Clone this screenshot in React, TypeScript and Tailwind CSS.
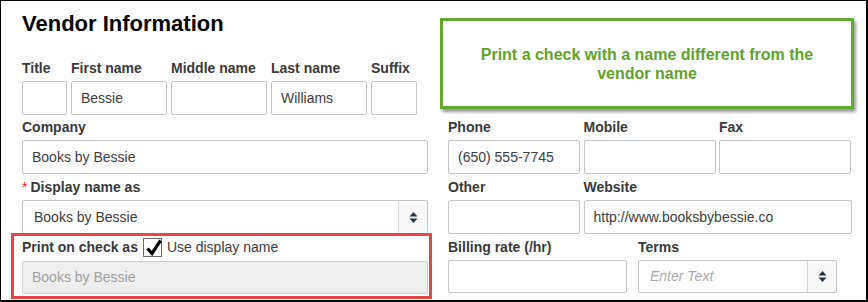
import React from 'react';

function Label({ children, required }: { children: React.ReactNode; required?: boolean }) {
  return (
    <div className="mb-[4px] h-[17px] whitespace-nowrap text-[14px] font-bold leading-[17px] text-[#393a3d]">
      {required && <span className="mr-[3px] font-normal text-[#d52b1e]">*</span>}
      {children}
    </div>
  );
}

function Input({ value, className = '' }: { value?: string; className?: string }) {
  return (
    <div
      className={`flex h-[34px] items-center rounded-[2px] border border-[#c4c6ca] bg-white pl-[9px] text-[14px] text-[#404040] ${className}`}
    >
      {value}
    </div>
  );
}

function Arrows() {
  return (
    <div className="flex w-[29px] shrink-0 items-center justify-center border-l border-[#d4d6d9] bg-[#f8f8f8]">
      <svg width="9" height="13" viewBox="0 0 9 13">
        <path d="M4.5 1 L8.5 5.5 L0.5 5.5 Z" fill="#253447" />
        <path d="M4.5 12 L8.5 7.5 L0.5 7.5 Z" fill="#253447" />
      </svg>
    </div>
  );
}

function Select({ value, placeholder, className = '' }: { value?: string; placeholder?: string; className?: string }) {
  return (
    <div className={`flex h-[34px] rounded-[2px] border border-[#c4c6ca] bg-white ${className}`}>
      <div className="flex flex-1 items-center pl-[11px] text-[14px] text-[#404040]">
        {value ?? <span className="italic text-[#a9abae]">{placeholder}</span>}
      </div>
      <Arrows />
    </div>
  );
}

function Field({ label, value, width, required }: { label: string; value?: string; width: string; required?: boolean }) {
  return (
    <div className={width}>
      <Label required={required}>{label}</Label>
      <Input value={value} />
    </div>
  );
}

export default function App() {
  return (
    <div className="relative h-[302px] w-[868px] overflow-hidden border-b-2 border-l border-r-2 border-t border-black bg-white pl-[21px] pt-[10px] font-['Liberation_Sans',Arial,sans-serif]">
      <h2 className="h-[26px] text-[22px] font-bold leading-[26px] text-black">Vendor Information</h2>

      {/* row 1 */}
      <div className="mt-[23px] flex gap-[4px]">
        <Field label="Title" width="w-[45px]" />
        <Field label="First name" value="Bessie" width="w-[96px]" />
        <Field label="Middle name" width="w-[96px]" />
        <Field label="Last name" value="Williams" width="w-[96px]" />
        <Field label="Suffix" width="w-[46px]" />
      </div>

      {/* row 2 */}
      <div className="mt-[4px] flex gap-[20px]">
        <Field label="Company" value="Books by Bessie" width="w-[406px]" />
        <div className="flex gap-[3.5px]">
          <Field label="Phone" value="(650) 555-7745" width="w-[132px]" />
          <Field label="Mobile" width="w-[132px]" />
          <Field label="Fax" width="w-[132px]" />
        </div>
      </div>

      {/* row 3 */}
      <div className="mt-[5px] flex gap-[20px]">
        <div className="w-[406px]">
          <Label required>Display name as</Label>
          <Select value="Books by Bessie" />
        </div>
        <div className="flex gap-[3.5px]">
          <Field label="Other" width="w-[132px]" />
          <Field label="Website" value="http://www.booksbybessie.co" width="w-[268px]" />
        </div>
      </div>

      {/* row 4 */}
      <div className="mt-[4px] flex gap-[20px]">
        <div className="w-[406px]">
          <div className="mb-[4px] flex h-[19px] items-center text-[14px] text-[#393a3d]">
            <span className="font-bold">Print on check as</span>
            <span className="relative ml-[5px] h-[19px] w-[19px] border border-[#6b6b6b] bg-white">
              <svg className="absolute left-[1px] top-[-1px]" width="18" height="19" viewBox="0 0 18 19">
                <path d="M2.5 10.5 L7 15.5 L15.5 2.5" fill="none" stroke="#000" strokeWidth="3.2" />
              </svg>
            </span>
            <span className="ml-[5px] text-[#404040]">Use display name</span>
          </div>
          <Input value="Books by Bessie" className="!h-[33px] !border-[#d0d0d0] !bg-[#eeeeee] !text-[#a2a2a2]" />
        </div>
        <div className="mt-[1px] flex gap-[11px]">
          <div className="w-[179px]">
            <Label>Billing rate (/hr)</Label>
            <Input className="!h-[33px]" />
          </div>
          <div className="w-[199px]">
            <Label>Terms</Label>
            <Select placeholder="Enter Text" className="!h-[33px]" />
          </div>
        </div>
      </div>

      {/* annotations */}
      <div className="pointer-events-none absolute left-[10px] top-[232px] h-[66px] w-[421px] border-[3px] border-[#e0484a]" />
      <div className="absolute left-[439px] top-[17px] flex h-[91px] w-[414px] items-center justify-center border-[3px] border-[#63a72f] bg-white px-[20px] text-center text-[16px] font-bold leading-[19px] text-[#5fa32b] shadow-[2px_3px_3px_rgba(0,0,0,0.4)]">
        Print a check with a name different from the
        <br />
        vendor name
      </div>
    </div>
  );
}
